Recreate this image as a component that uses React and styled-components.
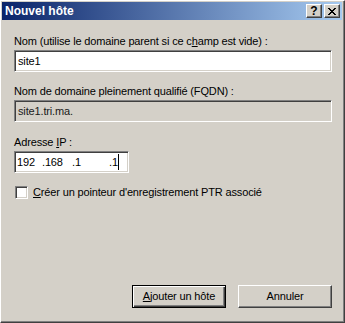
import React from "react";
import styled, { createGlobalStyle } from "styled-components";

const Global = createGlobalStyle`
  html, body { margin: 0; padding: 0; background: #d4d0c8; }
  body { font-family: "Liberation Sans", Arial, sans-serif; font-size: 11px; color: #000; letter-spacing: -0.15px; }
`;

const Frame = styled.div`
  box-sizing: border-box;
  width: 345px;
  height: 323px;
  background: #d4d0c8;
  border-style: solid;
  border-width: 1px;
  border-color: #ffffff #404040 #404040 #ffffff;
  display: flex;
`;

const Inner = styled.div`
  flex: 1;
  display: flex;
  flex-direction: column;
  padding: 1px;
  border-right: 1px solid #808080;
  border-bottom: 1px solid #808080;
`;

const TitleBar = styled.div`
  height: 18px;
  flex: none;
  display: flex;
  align-items: center;
  padding: 0 2px 0 2px;
  background: linear-gradient(to right, #0a246a, #a6caf0);
`;

const Title = styled.div`
  flex: 1;
  color: #fff;
  font-weight: bold;
  font-size: 12px;
  letter-spacing: 0;
  line-height: 18px;
  padding-left: 1px;
`;

const CapButton = styled.div`
  box-sizing: border-box;
  width: 16px;
  height: 14px;
  margin-left: ${(p) => p.$gap || 0}px;
  background: #d4d0c8;
  border-style: solid;
  border-width: 1px;
  border-color: #ffffff #404040 #404040 #ffffff;
  box-shadow: inset -1px -1px #808080;
  display: flex;
  align-items: center;
  justify-content: center;
  font-weight: bold;
  font-size: 12px;
  letter-spacing: 0;
  line-height: 12px;
  color: #000;
`;

const Content = styled.div`
  flex: 1;
  display: flex;
  flex-direction: column;
  padding: 15px 10px 12px 12px;
`;

const Group = styled.div`
  display: flex;
  flex-direction: column;
  margin-top: ${(p) => p.$top || 0}px;
`;

const Label = styled.div`
  line-height: 13px;
  height: 13px;
  margin-bottom: 2px;
  white-space: nowrap;
`;

const U = styled.span`
  text-decoration: underline;
`;

const Field = styled.div`
  box-sizing: border-box;
  height: 22px;
  width: ${(p) => p.$width || "100%"};
  background: ${(p) => (p.$readonly ? "#d4d0c8" : "#ffffff")};
  color: ${(p) => (p.$readonly ? "#1a1a1a" : "#000")};
  border-style: solid;
  border-width: 1px;
  border-color: #808080 #ffffff #ffffff #808080;
  box-shadow: inset 1px 1px #404040, inset -1px -1px #d4d0c8;
  display: flex;
  align-items: center;
  padding: 0 3px;
  line-height: 13px;
  white-space: nowrap;
`;

const IpField = styled(Field)`
  padding: 0 0 0 2px;
`;

const Octet = styled.span`
  display: inline-block;
  width: ${(p) => p.$w}px;
  flex: none;
`;

const Caret = styled.span`
  display: inline-block;
  width: 1px;
  height: 16px;
  background: #000;
`;

const CheckRow = styled.div`
  display: flex;
  align-items: center;
  margin-top: 13px;
  height: 13px;
`;

const CheckBox = styled.div`
  box-sizing: border-box;
  width: 13px;
  height: 13px;
  background: #fff;
  border-style: solid;
  border-width: 1px;
  border-color: #808080 #ffffff #ffffff #808080;
  box-shadow: inset 1px 1px #404040, inset -1px -1px #d4d0c8;
  margin-left: 1px;
  flex: none;
`;

const CheckLabel = styled.span`
  margin-left: 5px;
  line-height: 13px;
  white-space: nowrap;
`;

const Spacer = styled.div`
  flex: 1;
`;

const Buttons = styled.div`
  display: flex;
  justify-content: flex-end;
  gap: 12px;
`;

const Button = styled.div`
  box-sizing: border-box;
  width: 94px;
  height: 23px;
  background: #d4d0c8;
  border-style: solid;
  border-width: 1px;
  border-color: ${(p) => (p.$default ? "#000" : "#ffffff #404040 #404040 #ffffff")};
  box-shadow: ${(p) =>
    p.$default
      ? "inset 1px 1px #ffffff, inset -1px -1px #404040, inset -2px -2px #808080"
      : "inset -1px -1px #808080, inset 1px 1px #d4d0c8"};
  display: flex;
  align-items: center;
  justify-content: center;
  line-height: 13px;
  white-space: nowrap;
`;

const CloseGlyph = () => (
  <svg width="8" height="7" viewBox="0 0 8 7" shapeRendering="crispEdges">
    <path
      d="M0 0h2v1h-2zM6 0h2v1h-2zM1 1h2v1h-2zM5 1h2v1h-2zM2 2h4v1h-4zM3 3h2v1h-2zM2 4h4v1h-4zM1 5h2v1h-2zM5 5h2v1h-2zM0 6h2v1h-2zM6 6h2v1h-2z"
      fill="#000"
    />
  </svg>
);

export default function App() {
  return (
    <>
      <Global />
      <Frame>
        <Inner>
          <TitleBar>
            <Title>Nouvel hôte</Title>
            <CapButton>?</CapButton>
            <CapButton $gap={2}>
              <CloseGlyph />
            </CapButton>
          </TitleBar>
          <Content>
            <Group>
              <Label>
                Nom (utilise le domaine parent si ce c<U>h</U>amp est vide) :
              </Label>
              <Field>site1</Field>
            </Group>
            <Group $top={13}>
              <Label>Nom de domaine pleinement qualifié (FQDN) :</Label>
              <Field $readonly>site1.tri.ma.</Field>
            </Group>
            <Group $top={14}>
              <Label>
                Adresse <U>I</U>P :
              </Label>
              <IpField $width="115px">
                <Octet $w={25}>192</Octet>
                <Octet $w={30}>.168</Octet>
                <Octet $w={37}>.1</Octet>
                <span>.1</span>
                <Caret />
              </IpField>
            </Group>
            <CheckRow>
              <CheckBox />
              <CheckLabel>
                <U>C</U>réer un pointeur d'enregistrement PTR associé
              </CheckLabel>
            </CheckRow>
            <Spacer />
            <Buttons>
              <Button $default>
                <span>
                  <U>A</U>jouter un hôte
                </span>
              </Button>
              <Button>Annuler</Button>
            </Buttons>
          </Content>
        </Inner>
      </Frame>
    </>
  );
}
